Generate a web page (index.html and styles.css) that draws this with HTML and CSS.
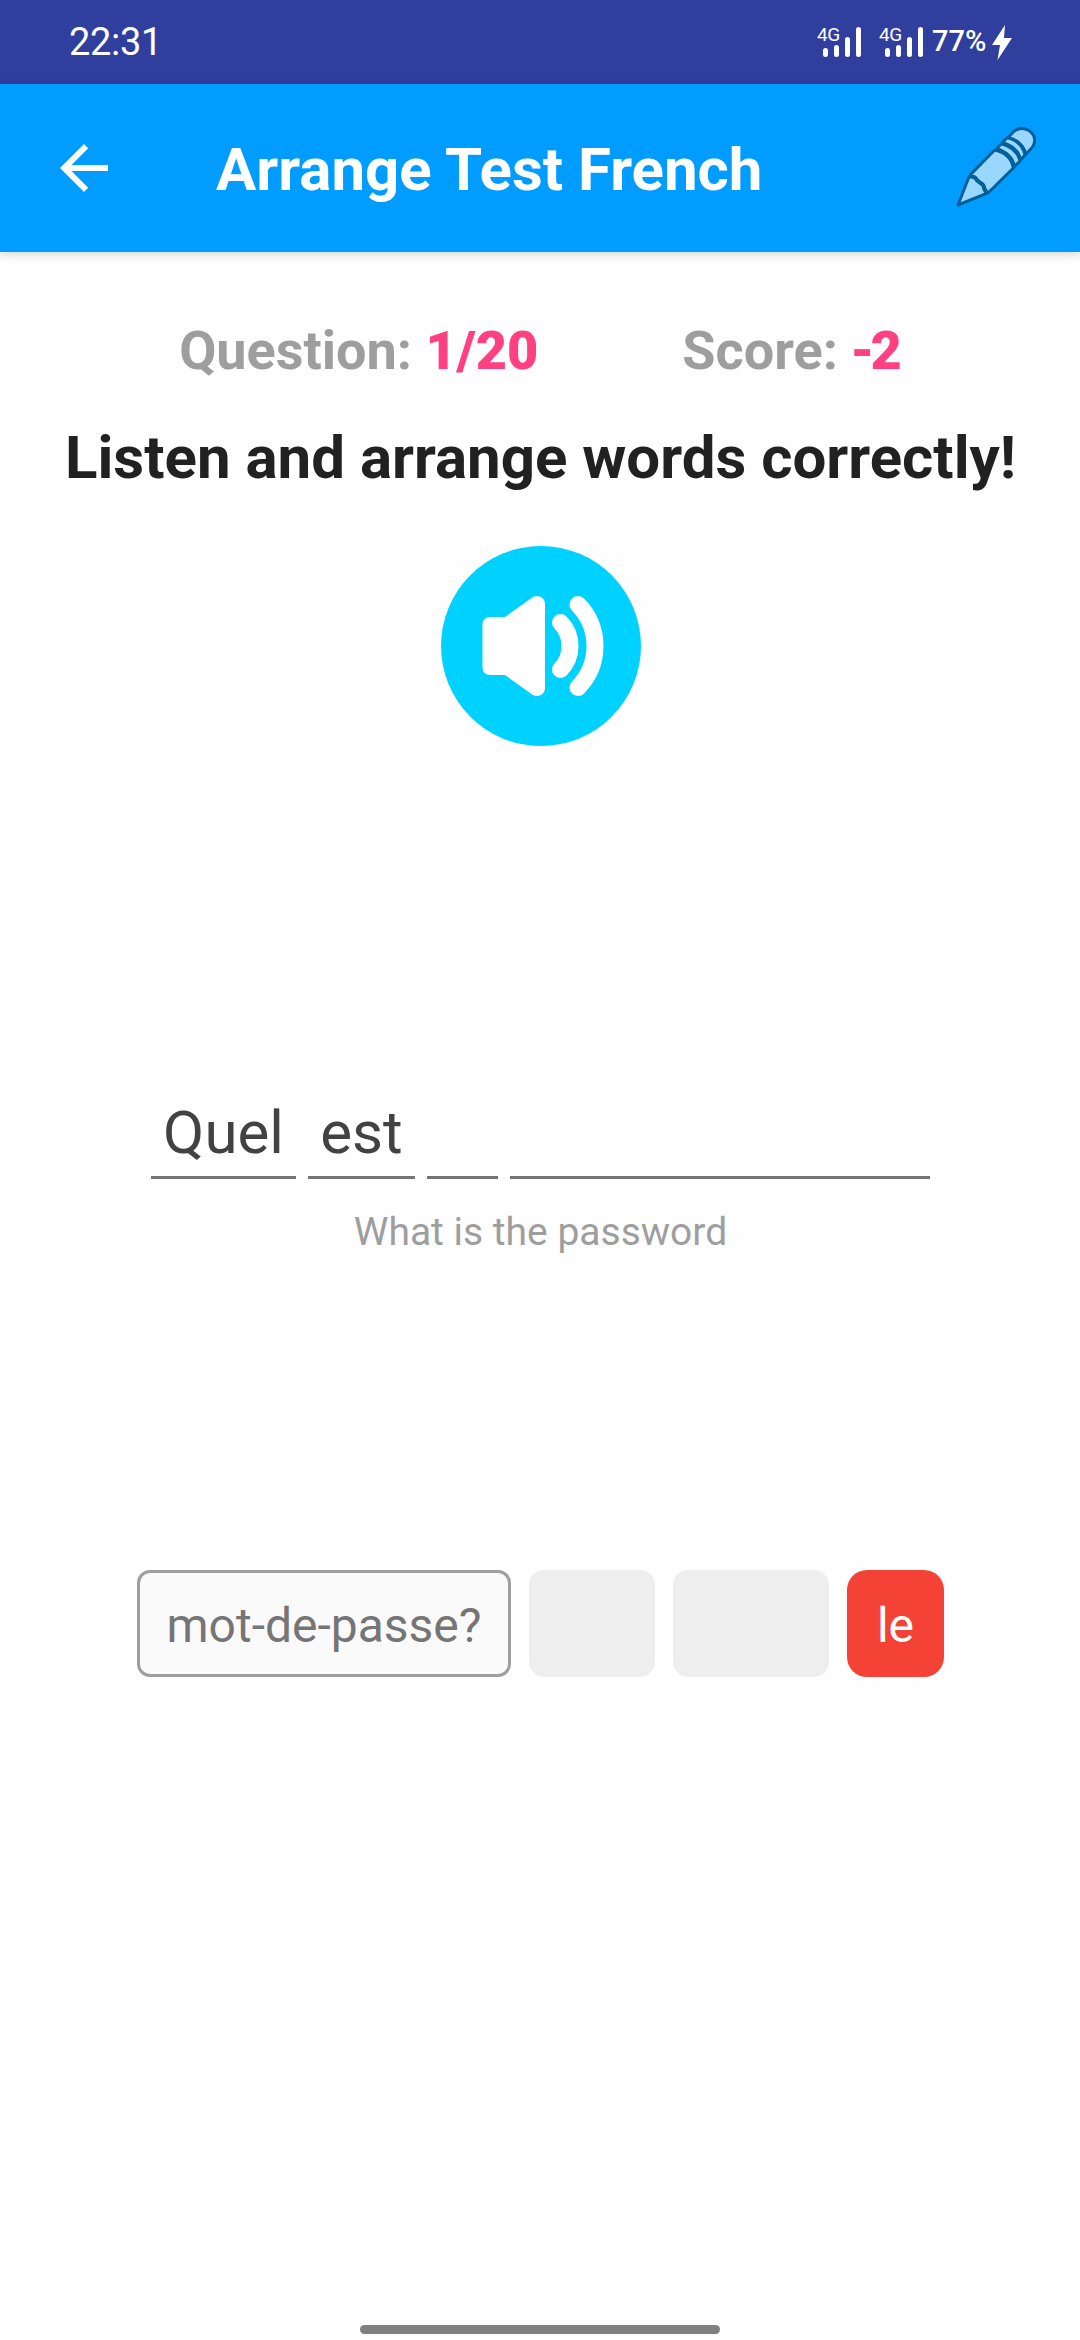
FILE: index.html
```html
<!DOCTYPE html>
<html lang="en">
<head>
<meta charset="utf-8">
<title>Arrange Test French</title>
<link rel="stylesheet" href="styles.css">
</head>
<body>
<div class="status-bar">
  <span class="clock">22:31</span>
  <div class="status-icons">
    <div class="signal"><span class="network">4G</span>
      <svg width="45" height="32" viewBox="0 0 45 32"><path d="M8.5 24.500v4M19.500 21.500v7M30.500 13.500v15M41.500 3.500v25"/></svg></div>
    <div class="signal"><span class="network">4G</span>
      <svg width="45" height="32" viewBox="0 0 45 32"><path d="M8.5 24.500v4M19.500 21.500v7M30.500 13.500v15M41.500 3.500v25"/></svg></div>
    <span class="battery">77%</span>
    <svg class="bolt" width="20" height="36" viewBox="0 0 20 36"><path d="M13 0 0 20h8L5.500 35 20 13h-8z"/></svg>
  </div>
</div>
<header class="app-bar">
  <svg class="back" width="72" height="72" viewBox="0 0 24 24"><path d="M20 11H7.830l5.590-5.590L12 4l-8 8 8 8 1.410-1.410L7.830 13H20v-2z"/></svg>
  <h1>Arrange Test French</h1>
  <svg class="pencil" width="90" height="90" viewBox="150 132 270 270">
    <path d="M174 375 208 288 222 291Q228 294 231 301L243 310Q252 314 252 325L260 340Z"/>
    <path d="M212 283 284 210Q332 220 340 264L264 339 254 325Q253 315 243 310L233 301Q229 293 221 290L210 288Z"/>
    <path d="M290 206 304 191Q350 202 360 243L344 259Q334 219 290 206Z"/>
    <path d="M307 188 321 173Q366 184 375 225L362 239Q353 200 307 188Z"/>
    <path d="M325 172 342 154Q362 138 386 151 410 168 402 192 400 200 378 222 366 182 325 172Z"/>
    <path class="tip-edge" d="M208 289 222 291Q228 294 231 301L243 310Q252 314 252 325L260 340"/>
  </svg>
</header>
<main>
  <div class="stats"><span>Question: <b>1/20</b></span><span>Score: <b class="score">-2</b></span></div>
  <h2>Listen and arrange words correctly!</h2>
  <svg class="speaker" width="200" height="200" viewBox="0 0 200 200">
    <circle cx="100" cy="100" r="100" fill="#00d2ff"/>
    <path fill="#fff" d="M49.500 71H64L90.500 52C96 47.500 104 51 104 58V142C104 149 96 152.500 90.500 148L64 129H49.500Q41.500 129 41.500 121V79Q41.500 71 49.500 71Z"/>
    <path fill="none" stroke="#fff" stroke-width="17" stroke-linecap="round" d="M119.500 76.500Q129 86 129 100T119.500 123.500M137 58.500Q154 76 154 100T137 141.500"/>
  </svg>
  <div class="answer"><span class="slot quel">Quel</span><span class="slot est">est</span><span class="slot le"></span><span class="slot mot"></span></div>
  <p class="hint">What is the password</p>
  <div class="words"><span class="word">mot-de-passe?</span><span class="word used first"></span><span class="word used second"></span><span class="word wrong">le</span></div>
</main>
<div class="nav-handle"></div>
</body>
</html>
```
FILE: styles.css
```css
* { box-sizing: border-box; margin: 0; }
body { width: 1080px; height: 2340px; overflow: hidden; display: flex; flex-direction: column; background: #fefefe; font-family: Roboto, sans-serif; }
svg { display: block; flex: none; }
.status-bar { height: 84px; background: #303e9e; color: #fff; display: flex; justify-content: space-between; padding: 0 68px 0 69px; }
.clock { font: 38px/84px Roboto, sans-serif; letter-spacing: -.3px; }
.status-icons { display: flex; }
.signal { display: flex; width: 62px; padding-top: 26px; }
.signal + .signal { width: 53px; }
.network { font: 400 19px/18px Roboto, sans-serif; letter-spacing: -.5px; width: 24px; margin-right: -24px; }
.signal path { fill: none; stroke: #fff; stroke-width: 5; stroke-linecap: round; }
.battery { font: 500 29px/82px Roboto, sans-serif; width: 60px; }
.bolt { margin-top: 25px; fill: #fff; }
.app-bar { height: 168px; flex: none; background: #009cff; box-shadow: 0 2px 10px rgba(0,0,0,.18); display: flex; color: #fff; position: relative; }
.back { margin: 48px 0 0 48px; fill: #fff; }
h1 { font-size: 60px; line-height: 70px; margin: 51px 0 0 96px; width: 700px; }
.pencil { margin: 40px 0 0 34px; fill: #99d7ff; stroke: #00609a; stroke-width: 9; stroke-linejoin: round; }
.tip-edge { fill: none; stroke-width: 12; }
main { display: flex; flex-direction: column; align-items: center; padding-left: 1px; }
.stats { display: flex; gap: 144px; margin-top: 67px; padding-right: 4px; font-size: 54px; line-height: 64px; font-weight: 700; color: #9e9e9e; }
.stats b { color: #ff4081; }
.stats .score { letter-spacing: -4px; margin-left: -1px; }
h2 { font-size: 60px; line-height: 70px; margin-top: 40px; color: #212121; }
.speaker { margin-top: 53px; }
.answer { display: flex; gap: 12px; margin-top: 342px; }
.slot { height: 91px; border-bottom: 3px solid #757575; color: #424242; font-size: 60px; line-height: 89px; text-align: center; }
.quel { width: 145px; } .est { width: 107px; } .le { width: 71px; } .mot { width: 420px; }
.hint { font-size: 39px; line-height: 46px; margin-top: 30px; color: #9e9e9e; }
.words { display: flex; gap: 18px; margin-top: 315px; }
.word { height: 107px; border: 3px solid #9e9e9e; border-radius: 13px; background: #fafafa; color: #757575; font-size: 48px; line-height: 105px; width: 374px; text-align: center; }
.used, .wrong { border: 0; }
.used { background: #eee; border-radius: 15px; }
.first { width: 126px; } .second { width: 156px; }
.wrong { width: 97px; background: #f44336; color: #fff; border-radius: 20px; line-height: 111px; }
.nav-handle { width: 360px; height: 9px; border-radius: 5px; background: #808080; margin: auto auto 6px; }
```
